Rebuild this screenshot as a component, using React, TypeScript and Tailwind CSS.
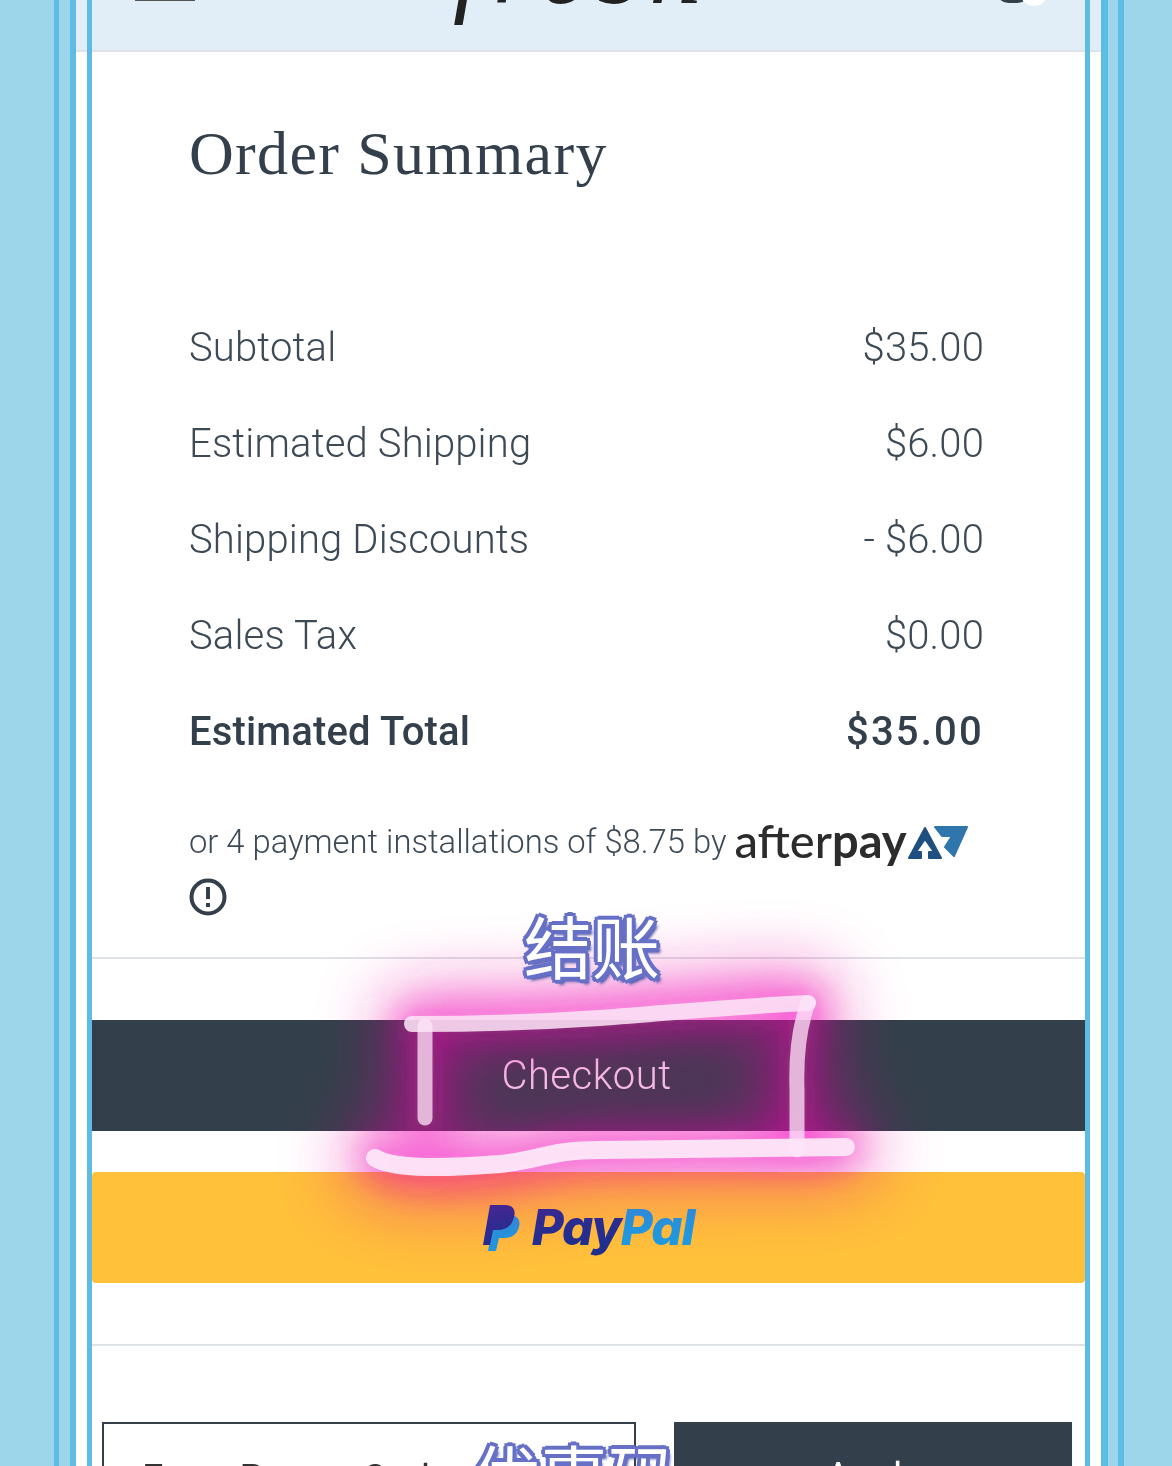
const rows = [
  { label: "Subtotal", value: "$35.00" },
  { label: "Estimated Shipping", value: "$6.00" },
  { label: "Shipping Discounts", value: "- $6.00" },
  { label: "Sales Tax", value: "$0.00" },
];

const strokes = [
  "M412 1024 C480 1024 540 1022 600 1018 C680 1012 740 1006 808 1003",
  "M808 1003 C798 1030 796 1060 797 1090 L797 1150",
  "M425 1026 L425 1118",
  "M375 1158 C395 1170 450 1168 500 1164 C540 1160 550 1150 600 1150 L846 1147",
];

const labelShadow =
  "absolute font-['Noto_Sans_CJK_SC',sans-serif] text-[68px] leading-[84px] text-white [text-shadow:4px_0_#6570c6,-4px_0_#6570c6,0_4px_#6570c6,0_-4px_#6570c6,3px_3px_#6570c6,-3px_3px_#6570c6,3px_-3px_#6570c6,-3px_-3px_#6570c6,4px_5px_3px_#4a54a8]";

function GlowLayer({ color, className }: { color: string; className: string }) {
  return (
    <g className={className}>
      <g filter="url(#glowWide)" stroke={color} strokeWidth="54" strokeLinecap="round" opacity="0.7">
        {strokes.map((d) => (
          <path key={d} d={d} />
        ))}
      </g>
      <g filter="url(#glowNear)" stroke={color} strokeWidth="26" strokeLinecap="round" opacity="0.6">
        {strokes.map((d) => (
          <path key={d} d={d} />
        ))}
      </g>
    </g>
  );
}

function Annotation() {
  return (
    <svg className="pointer-events-none absolute left-0 top-0" width="1172" height="1466" viewBox="0 0 1172 1466" fill="none">
      <defs>
        <filter id="glowWide" filterUnits="userSpaceOnUse" x="100" y="700" width="1000" height="766">
          <feGaussianBlur stdDeviation="36" />
        </filter>
        <filter id="glowNear" filterUnits="userSpaceOnUse" x="100" y="700" width="1000" height="766">
          <feGaussianBlur stdDeviation="16" />
        </filter>
      </defs>
      {/* multiply tints white and yellow, screen lifts the dark bar */}
      <GlowLayer color="#e81aa0" className="mix-blend-multiply" />
      <GlowLayer color="#c0108a" className="mix-blend-screen" />
      <g stroke="#fde6f8" strokeLinecap="round" strokeLinejoin="round">
        <path d={strokes[0]} strokeWidth="16" opacity="0.85" />
        <path d={strokes[1]} strokeWidth="15" opacity="0.75" />
        <path d={strokes[2]} strokeWidth="15" opacity="0.75" />
        <path d={strokes[3]} strokeWidth="18" opacity="0.95" />
      </g>
    </svg>
  );
}

function AfterpayMark() {
  return (
    <svg width="62" height="36" viewBox="0 0 62 36" className="shrink-0 self-center" fill="#1f4e80">
      <path d="M2 33 L18 3 L34 33 H22 V27 H27 L18 14 L9 27 H14 V33 Z" stroke="#1f4e80" strokeWidth="2" strokeLinejoin="round" />
      <path d="M28 2 H60 L47 31 L38 22 L45 11 H35 Z" fill="#2f76ad" stroke="#2f76ad" strokeWidth="2" strokeLinejoin="round" />
    </svg>
  );
}

function PaypalMark() {
  return (
    <svg width="37" height="46" viewBox="0 0 37 46" fill="none">
      <path d="M12 10 H26 C34 10 38 15 36 22 C34 30 28 33 21 33 H16 L13 46 H5 Z" fill="#1c9be0" />
      <path d="M7 0 H22 C30 0 33 5 31 12 C29 21 23 25 15 25 H10 L7 40 H0 Z" fill="#1e2f8f" />
    </svg>
  );
}

export default function App() {
  return (
    <div className="relative isolate flex h-[1466px] w-[1172px] overflow-hidden bg-[#9dd6ea] font-['Roboto',sans-serif]">
      <div className="ml-[54px] w-[5px] bg-[#5cbce3]" />
      <div className="ml-[11px] w-[6px] bg-[#5cbce3]" />

      <main className="relative flex w-[1025px] flex-col bg-white text-[#3d4a56]">
        <header className="relative h-[52px] shrink-0 overflow-hidden border-b-2 border-[#dfe2e6] bg-[#e1edf7]">
          <div className="absolute left-[59px] top-0 h-px w-[60px] bg-[#555]" />
          <div className="absolute left-[377px] top-[-84px] font-['Liberation_Serif',serif] text-[104px] italic leading-none tracking-[11px] text-[#222]">
            fresh
          </div>
          <div className="absolute left-[920px] top-[-22px] h-[25px] w-[34px] rounded-full bg-[#33404c]" />
          <div className="absolute left-[944px] top-[-22px] h-7 w-7 rounded-full bg-white" />
        </header>

        <div className="mx-4 flex flex-1 flex-col">
          <h1 className="ml-[97px] mt-[65px] font-['Liberation_Serif',serif] text-[62px] font-normal leading-[72px] tracking-[1.35px] text-[#333f4a]">
            Order Summary
          </h1>

          <div className="mt-[111px] flex flex-col px-[97px] pr-[101px] text-[40px] font-light leading-[96px] tracking-[0.15px]">
            {rows.map((row) => (
              <div key={row.label} className="flex justify-between">
                <span>{row.label}</span>
                <span>{row.value}</span>
              </div>
            ))}
            <div className="flex justify-between font-medium text-[#333f4a]">
              <span>Estimated Total</span>
              <span className="tracking-[2.2px]">$35.00</span>
            </div>
          </div>

          <div className="ml-[97px] mt-[35px] flex h-[56px] items-center text-[32.75px] font-light">
            <span>or 4 payment installations of $8.75 by</span>
            <span className="mb-[6px] ml-[8px] font-['Lato',sans-serif] text-[47px] font-medium leading-none text-[#2c2c2c]">
              after<span className="font-bold">pay</span>
            </span>
            <AfterpayMark />
          </div>

          <svg className="ml-[97px] mt-[7px] shrink-0" width="38" height="38" viewBox="0 0 38 38" fill="none">
            <circle cx="19" cy="19" r="16.5" stroke="#33404c" strokeWidth="4" />
            <path d="M19 9 V21" stroke="#33404c" strokeWidth="4" />
            <rect x="17" y="25" width="4" height="4" fill="#33404c" />
          </svg>

          <div className="mt-[41px] h-[2px] bg-[#dfe2e6]" />

          <button className="mt-[61px] h-[111px] shrink-0 bg-[#333f4a] pr-[4px] text-[40px] font-light tracking-[0.5px] text-[#f8dcf0]">
            Checkout
          </button>
          <button className="mt-[41px] flex h-[111px] shrink-0 items-center justify-center gap-[12px] rounded-[4px] bg-[#ffc03a]">
            <PaypalMark />
            <span className="font-['Inter',sans-serif] text-[49px] font-extrabold italic leading-none tracking-[-1px] text-[#1e2f8f]">
              Pay<span className="text-[#1c9be0]">Pal</span>
            </span>
          </button>

          <div className="mt-[61px] h-[2px] bg-[#dfe2e6]" />

          <div className="mt-[76px] flex gap-[38px] pl-[10px] pr-[13px]">
            <div className="h-[90px] w-[534px] border-2 border-[#333f4a] px-[38px] pt-[33px] text-[38px] leading-[44px] text-[#333]">
              Enter Promo Code
            </div>
            <div className="flex h-[90px] flex-1 justify-center bg-[#333f4a] pt-[33px] text-[38px] leading-[44px] text-white">
              Apply
            </div>
          </div>
        </div>

        <div className="pointer-events-none absolute inset-y-0 left-[11px] right-[11px] border-x-[5px] border-[#5cbce3]" />
      </main>

      <div className="w-[7px] bg-[#5cbce3]" />
      <div className="ml-[10px] w-[6px] bg-[#5cbce3]" />

      <Annotation />

      <div className={`${labelShadow} left-[524px] top-[903px]`}>结账</div>
      <div className={`${labelShadow} left-[472px] top-[1432px]`}>优惠码</div>
    </div>
  );
}
